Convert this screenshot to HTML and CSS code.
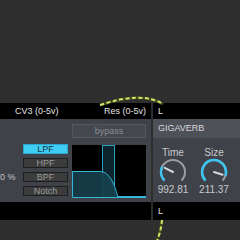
FILE: index.html
```html
<!DOCTYPE html>
<html lang="en">
  <head>
    <meta charset="UTF-8" />
    <title>Device rack</title>
    <link rel="stylesheet" href="styles.css">
  </head>
  <body>
    <div class="stage">
      <div class="rack">
        <div class="col col-filter">
          <div class="io io-top">
            <span class="io-label cv">CV3 (0-5v)</span>
            <span class="io-label">Res (0-5v)</span>
          </div>
          <div class="panel filter">
            <div class="filter-head">
              <div class="bypass">bypass</div>
            </div>
            <div class="filter-row">
              <div class="amount">0 %</div>
              <div class="modes">
                <div class="mode active">LPF</div>
                <div class="mode">HPF</div>
                <div class="mode">BPF</div>
                <div class="mode">Notch</div>
              </div>
              <svg class="graph" width="74" height="53" viewBox="0 0 74 53">
                <rect x="0" y="0" width="74" height="53" fill="#000"/>
                <rect x="30.5" y="0.5" width="12" height="52" fill="#0c252d" stroke="#2a9fc0" stroke-width="1"/>
                <path d="M0.5 26.5 H28 C36 26.5 42 36 46 52.5 H0.5 Z" fill="#17404e" fill-opacity="0.9" stroke="#34b7d9" stroke-width="1"/>
                <line x1="46" y1="52" x2="74" y2="52" stroke="#34b7d9" stroke-width="2"/>
              </svg>
            </div>
          </div>
          <div class="io io-bottom"></div>
        </div>
        <div class="col col-verb">
          <div class="io io-top">
            <span class="io-label">L</span>
          </div>
          <div class="panel verb">
            <div class="verb-title">GIGAVERB</div>
            <div class="knobs">
              <div class="knob">
                <div class="knob-name">Time</div>
                <svg width="30" height="30" viewBox="0 0 30 30">
                  <path d="M6.51 23.49 A12 12 0 1 1 23.49 23.49" fill="none" stroke="#9b9ea3" stroke-width="2"/>
                  <path d="M6.51 23.49 A12 12 0 0 1 4.31 9.55" fill="none" stroke="#3cc4ee" stroke-width="2.6"/>
                  <line x1="15" y1="15" x2="6.8" y2="10.8" stroke="#d4d6d9" stroke-width="2" stroke-linecap="round"/>
                </svg>
                <div class="knob-value">992.81</div>
              </div>
              <div class="knob">
                <div class="knob-name">Size</div>
                <svg width="30" height="30" viewBox="0 0 30 30">
                  <path d="M6.51 23.49 A12 12 0 1 1 23.49 23.49" fill="none" stroke="#9b9ea3" stroke-width="2"/>
                  <path d="M6.51 23.49 A12 12 0 1 1 26.41 18.71" fill="none" stroke="#3cc4ee" stroke-width="2.6"/>
                  <line x1="15" y1="15" x2="23.6" y2="17.8" stroke="#d4d6d9" stroke-width="2" stroke-linecap="round"/>
                </svg>
                <div class="knob-value">211.37</div>
              </div>
            </div>
          </div>
          <div class="io io-bottom">
            <span class="io-label">L</span>
          </div>
        </div>
      </div>
      <!-- patch cables lie over the rack -->
      <svg class="cables" width="240" height="240" viewBox="0 0 240 240">
        <path d="M100 105 Q142 91 163 104" fill="none" stroke="#3d4a1c" stroke-width="3.2"/>
        <path d="M100 105 Q142 91 163 104" fill="none" stroke="#d2e36e" stroke-width="2" stroke-dasharray="4 2.5"/>
        <path d="M162 220 Q161 231 157 241" fill="none" stroke="#3d4a1c" stroke-width="3.2"/>
        <path d="M162 220 Q161 231 157 241" fill="none" stroke="#d2e36e" stroke-width="2" stroke-dasharray="4 2.5"/>
      </svg>
    </div>
  </body>
</html>
```
FILE: styles.css
```css
*{
    box-sizing: border-box;
    margin: 0;
    padding: 0;
}
body{
    font-family: "Liberation Sans", Arial, sans-serif;
    background-color: #2e2e2e;
    width: 240px;
    height: 240px;
    overflow: hidden;
}
.stage{
    position: relative;
    padding-top: 103px;
    height: 240px;
}
.rack{
    display: flex;
    gap: 2px;
}
.col{
    display: flex;
    flex-direction: column;
}
.col-filter{
    width: 151px;
}
.col-verb{
    flex: 1;
}
.io{
    background: #000;
    color: #e2e2e2;
    font-size: 9px;
    display: flex;
    align-items: center;
}
.io-top{
    height: 16px;
    justify-content: space-between;
    padding: 0 5px 0 15px;
}
.col-verb .io{
    padding-left: 5px;
}
.io-bottom{
    height: 18px;
}
.panel{
    height: 83px;
    background: #3f4249;
}
/* filter device */
.filter-head{
    padding: 5px 5px 0 72px;
}
.bypass{
    height: 14px;
    border: 1px solid #55585e;
    background: #45484f;
    color: #8a8e94;
    font-size: 9px;
    line-height: 12px;
    text-align: center;
}
.filter-row{
    display: flex;
    gap: 4px;
    margin-top: 6px;
}
.amount{
    width: 19px;
    padding-top: 28px;
    color: #c2c4c8;
    font-size: 9px;
    line-height: 10px;
    white-space: nowrap;
}
.modes{
    width: 45px;
    display: flex;
    flex-direction: column;
    gap: 4px;
}
.mode{
    height: 10px;
    background: #3c3c3c;
    border: 1px solid #1f1f1f;
    color: #9a9a9a;
    font-size: 9px;
    line-height: 8px;
    text-align: center;
}
.mode.active{
    background: #3fcdf4;
    border-color: #2aa7cb;
    color: #1d3640;
}
.graph{
    display: block;
    margin-top: 1px;
}
/* reverb device */
.verb-title{
    height: 19px;
    background: #4e5158;
    color: #d6d7da;
    font-size: 9px;
    line-height: 19px;
    padding-left: 5px;
}
.knobs{
    display: flex;
    gap: 7px;
    padding: 9px 0 0 3px;
}
.knob{
    width: 34px;
    display: flex;
    flex-direction: column;
    align-items: center;
}
.knob-name{
    color: #c9cbce;
    font-size: 10px;
    line-height: 11px;
}
.knob svg{
    display: block;
    margin-top: -1px;
}
.knob-value{
    color: #c9cbce;
    font-size: 10px;
    line-height: 10px;
    margin-top: -2px;
}
.cables{
    position: absolute;
    top: 0;
    left: 0;
    pointer-events: none;
}
```
